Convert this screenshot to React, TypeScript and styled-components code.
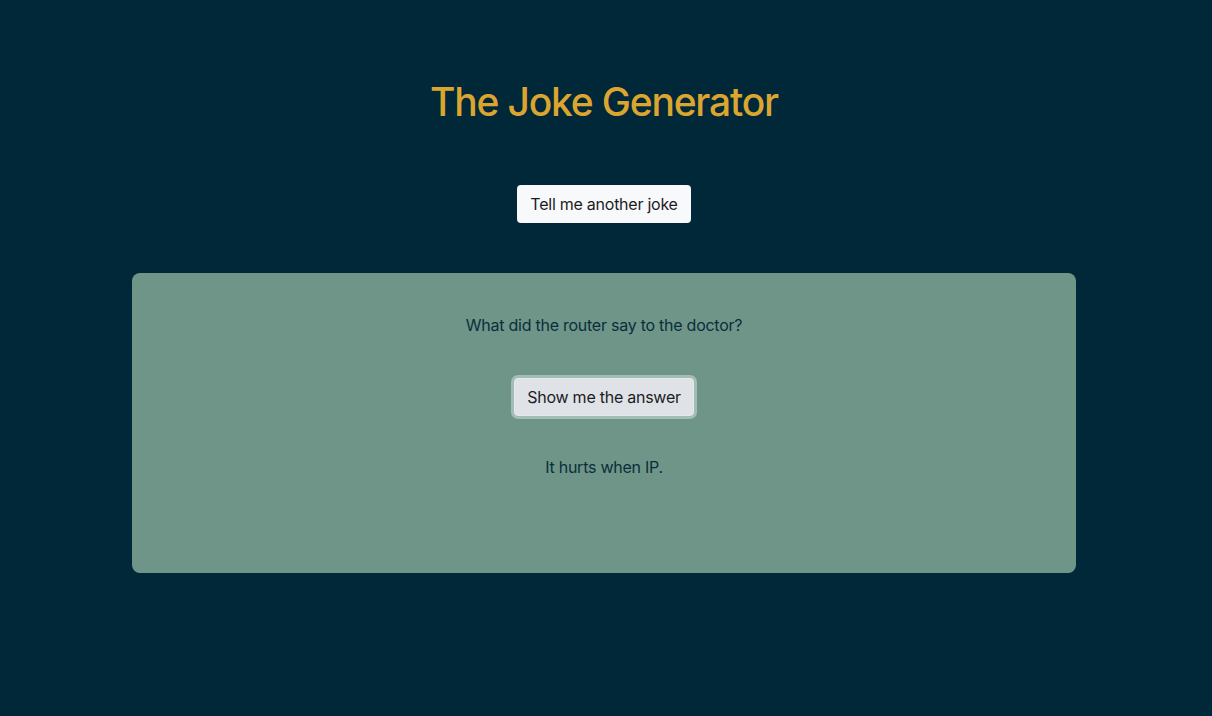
import React from "react";
import styled, { createGlobalStyle } from "styled-components";

const Global = createGlobalStyle`
  html, body { margin: 0; padding: 0; background: #002839; }
  body { font-family: Inter, "Noto Sans", "Liberation Sans", sans-serif; }
  * { box-sizing: border-box; }
`;

const Page = styled.main`
  min-height: 716px;
  display: flex;
  flex-direction: column;
  align-items: center;
  padding: 78px 4px 0 0;
`;

const Title = styled.h1`
  margin: 0;
  font-size: 39px;
  line-height: 48px;
  font-weight: 500;
  color: #dba52f;
  letter-spacing: -1.2px;
`;

const Button = styled.button<{ $focused?: boolean }>`
  font-family: inherit;
  font-size: 16px;
  line-height: 24px;
  letter-spacing: -0.25px;
  color: #1c1c1e;
  border: none;
  border-radius: 4px;
  padding: 7px 13px;
  cursor: pointer;
  background: ${(p) => (p.$focused ? "#dfe2e6" : "#f8f9fb")};
  box-shadow: ${(p) => (p.$focused ? "0 0 0 3px rgba(210, 220, 220, 0.55)" : "none")};
`;

const TopButton = styled(Button)`
  margin-top: 59px;
`;

const Card = styled.section`
  margin-top: 50px;
  width: 944px;
  height: 300px;
  background: #6e9587;
  border-radius: 8px;
  display: flex;
  flex-direction: column;
  align-items: center;
  padding-top: 40px;
`;

const Text = styled.p`
  margin: 0;
  font-size: 16px;
  line-height: 24px;
  letter-spacing: -0.25px;
  color: #0b2e3c;
`;

const AnswerButton = styled(Button)`
  margin-top: 41px;
  padding: 6px 12px;
  border: 1px solid #e6e9ec;
`;

const Answer = styled(Text)`
  margin-top: 39px;
`;

export default function App() {
  return (
    <>
      <Global />
      <Page>
        <Title>The Joke Generator</Title>
        <TopButton>Tell me another joke</TopButton>
        <Card>
          <Text>What did the router say to the doctor?</Text>
          <AnswerButton $focused>Show me the answer</AnswerButton>
          <Answer>It hurts when IP.</Answer>
        </Card>
      </Page>
    </>
  );
}
